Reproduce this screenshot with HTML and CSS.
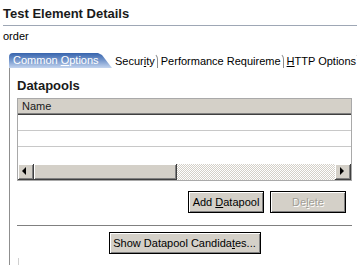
FILE: index.html
```html
<!DOCTYPE html>
<html lang="en">
  <head>
    <meta charset="UTF-8" />
    <title>Test Element Details</title>
    <link rel="stylesheet" href="styles.css">
  </head>
  <body>
    <h1 class="title">Test Element Details</h1>
    <div class="title-rule"></div>
    <p class="element-name">order</p>

    <div class="folder">
      <div class="tab-row">
        <div class="tab tab-active">Common <u>O</u>ptions</div>
        <div class="tab">Secur<u>i</u>ty</div>
        <div class="tab">Performance Requireme</div>
        <div class="tab"><u>H</u>TTP Options</div>
        <div class="tab tab-cut"></div>
      </div>

      <div class="folder-body">
        <h2 class="section-title">Datapools</h2>

        <div class="table">
          <div class="table-head">Name</div>
          <div class="table-row"></div>
          <div class="table-row"></div>
          <div class="table-row table-row-last"></div>
          <div class="hscroll">
            <div class="sb-btn">
              <svg width="16" height="16" viewBox="0 0 16 16"><path d="M5 8 L9 4 L9 12 Z" fill="#000"/></svg>
            </div>
            <div class="sb-thumb"></div>
            <div class="sb-track"></div>
            <div class="sb-btn">
              <svg width="16" height="16" viewBox="0 0 16 16"><path d="M10 8 L6 4 L6 12 Z" fill="#000"/></svg>
            </div>
          </div>
        </div>

        <div class="button-row">
          <button class="btn">Add <u>D</u>atapool</button>
          <button class="btn btn-disabled">De<u>l</u>ete</button>
        </div>

        <div class="etched"></div>

        <div class="center-row">
          <button class="btn btn-wide">Show Datapool Candida<u>t</u>es...</button>
        </div>

        <div class="next-group"></div>
      </div>
    </div>
  </body>
</html>
```

FILE: styles.css
```css
:root {
  --face: #d4d0c8;
  --shadow: #808080;
  --dark: #404040;
  --grid: #c8c8c8;
}

* {
  margin: 0;
  padding: 0;
  box-sizing: border-box;
}

body {
  font-family: "Liberation Sans", Arial, sans-serif;
  font-size: 11px;
  color: #000;
  background: #fff;
  width: 357px;
  height: 265px;
  overflow: hidden;
}

.title {
  font-size: 13px;
  font-weight: bold;
  line-height: 15px;
  margin: 6px 0 0 3px;
  color: #1a1a1a;
}

.title-rule {
  height: 1px;
  margin: 4px 0 0 3px;
  background: #9ea7b5;
}

.element-name {
  line-height: 13px;
  margin: 4px 0 0 3px;
}

/* tab folder */
.folder {
  margin: 10px 0 0 9px;
}

.tab-row {
  display: flex;
  height: 15px;
  white-space: nowrap;
  overflow: hidden;
}

.tab {
  flex: none;
  padding: 1px 2px 0 3px;
  border-right: 1px solid #8c8c8c;
  border-top-right-radius: 6px;
  border-top: 1px solid transparent;
  line-height: 13px;
}

.tab u {
  text-underline-offset: 1px;
}

.tab-active {
  width: 103px;
  padding: 0 0 0 4px;
  color: #fff;
  border: none;
  border-top-left-radius: 4px;
  background: linear-gradient(#3764ad 0%, #6f92c9 45%, #c3d4ee 100%);
  clip-path: polygon(0 0, 89px 0, 93px 2px, 103px 100%, 0 100%);
  line-height: 15px;
}

.tab-cut {
  width: 6px;
  padding: 0;
}

.folder-body {
  border-left: 1px solid #8f8f8f;
  padding: 10px 5px 0 7px;
  height: 200px;
}

.section-title {
  font-size: 13px;
  font-weight: bold;
  line-height: 15px;
  color: #1a1a1a;
}

/* table */
.table {
  margin-top: 5px;
  border: 1px solid #a9a9a9;
}

.table-head {
  height: 16px;
  line-height: 14px;
  padding-left: 4px;
  background: var(--face);
  border-bottom: 1px solid var(--dark);
  box-shadow: inset 0 -1px 0 var(--shadow);
  color: #1a1a1a;
}

.table-row {
  height: 16px;
  border-bottom: 1px solid var(--grid);
}

.table-row-last {
  height: 17px;
  border-bottom: none;
}

.hscroll {
  display: flex;
  height: 16px;
}

.sb-btn,
.sb-thumb {
  background: var(--face);
  border-right: 1px solid var(--dark);
  border-bottom: 1px solid var(--dark);
  box-shadow: inset 1px 1px 0 #fff, inset -1px -1px 0 var(--shadow);
}

.sb-btn {
  width: 16px;
  flex: none;
}

.sb-btn svg {
  display: block;
  margin: -1px 0 0 -1px;
}

.sb-thumb {
  width: 143px;
  flex: none;
}

.sb-track {
  flex: 1;
  background: conic-gradient(#fff 25%, var(--face) 0 50%, #fff 0 75%, var(--face) 0) 0 0 / 2px 2px;
}

/* buttons */
.button-row {
  display: flex;
  justify-content: flex-end;
  gap: 6px;
  margin-top: 10px;
  padding-right: 6px;
}

.btn {
  font-family: inherit;
  font-size: 11px;
  color: #000;
  height: 22px;
  width: 76px;
  background: var(--face);
  border: 1px solid #000;
  box-shadow: inset 1px 1px 0 #fff, inset -1px -1px 0 var(--shadow);
}

.btn u {
  text-underline-offset: 1px;
}

.btn-disabled {
  color: #a19e96;
  text-shadow: 1px 1px 0 #fff;
}

.btn-wide {
  width: 152px;
}

.etched {
  margin-top: 12px;
  height: 2px;
  border-top: 1px solid var(--shadow);
  border-bottom: 1px solid #fff;
}

.center-row {
  display: flex;
  justify-content: center;
  margin-top: 5px;
}

.next-group {
  margin: 4px 0 0 1px;
  width: 1px;
  height: 8px;
  background: #d0d0d0;
}
```
